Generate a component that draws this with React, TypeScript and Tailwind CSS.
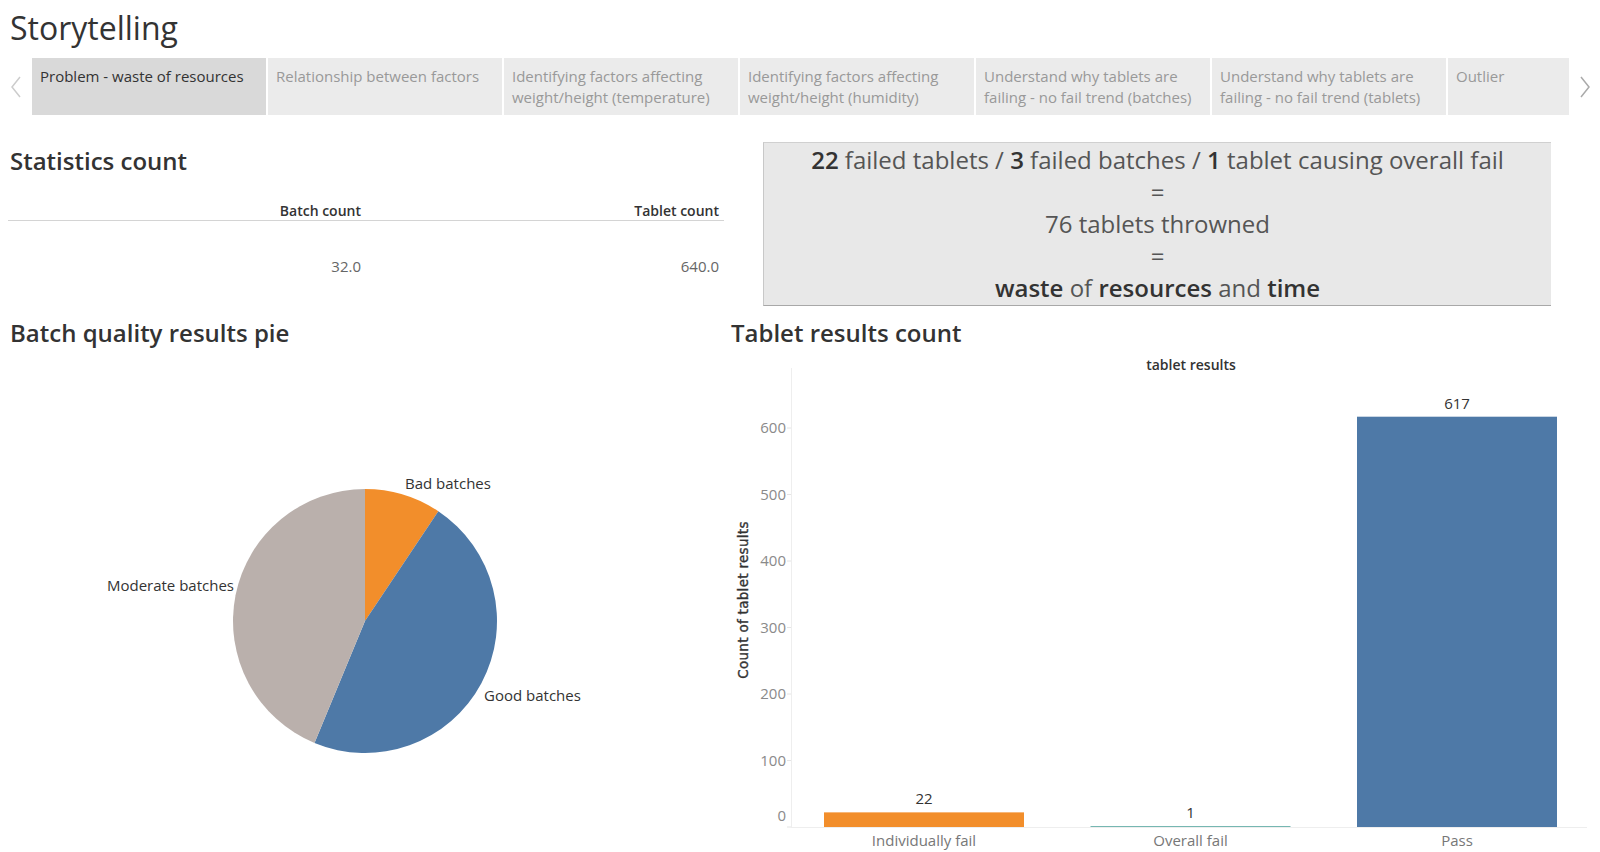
import React from "react";

const tabs = [
    { label: "Problem - waste of resources", active: true },
    { label: "Relationship between factors" },
    { label: "Identifying factors affecting weight/height (temperature)" },
    { label: "Identifying factors affecting weight/height (humidity)" },
    { label: "Understand why tablets are failing - no fail trend (batches)" },
    { label: "Understand why tablets are failing - no fail trend (tablets)" },
];

const pieSlices = [
    { name: "Bad batches", value: 3, color: "#f28e2b" },
    { name: "Good batches", value: 15, color: "#4e79a7" },
    { name: "Moderate batches", value: 14, color: "#bab0ac" },
];

const bars = [
    { name: "Individually fail", value: 22, color: "#f28e2b" },
    { name: "Overall fail", value: 1, color: "#76b7b2" },
    { name: "Pass", value: 617, color: "#4e79a7" },
];

function PieChart() {
    const cx = 365;
    const cy = 270;
    const r = 132;
    const total = pieSlices.reduce((s, p) => s + p.value, 0);
    const pt = (deg: number) => {
        const a = (deg * Math.PI) / 180;
        return [cx + r * Math.sin(a), cy - r * Math.cos(a)];
    };
    let start = 0;
    const paths = pieSlices.map((s) => {
        const sweep = (s.value / total) * 360;
        const [x1, y1] = pt(start);
        const [x2, y2] = pt(start + sweep);
        const large = sweep > 180 ? 1 : 0;
        start += sweep;
        return (
            <path
                key={s.name}
                d={`M${cx},${cy} L${x1},${y1} A${r},${r} 0 ${large} 1 ${x2},${y2} Z`}
                fill={s.color}
            />
        );
    });

    return (
        <svg width={731} height={501} className="block">
            {paths}
            <g fontSize="15" fill="#333">
                <text x={405} y={138}>Bad batches</text>
                <text x={234} y={240} textAnchor="end">Moderate batches</text>
                <text x={484} y={350}>Good batches</text>
            </g>
        </svg>
    );
}

function BarChart() {
    const base = 476;
    const k = 0.665;
    const ticks = [0, 100, 200, 300, 400, 500, 600];
    return (
        <svg width={869} height={501} className="block">
            <text x={460} y={19} textAnchor="middle" fontSize="14" fontWeight="600" fill="#333">
                tablet results
            </text>
            <line x1={60.5} y1={17} x2={60.5} y2={base} stroke="#eeeeee" />
            <line x1={60} y1={base + 0.5} x2={856} y2={base + 0.5} stroke="#eeeeee" />
            {ticks.map((t) => (
                <g key={t}>
                    <line x1={56} x2={60} y1={base - t * k} y2={base - t * k} stroke="#e4e4e4" />
                    <text
                        x={55}
                        y={(t === 0 ? 465 : base - t * k) + 5}
                        textAnchor="end"
                        fontSize="15"
                        fill="#8a8a8a"
                    >
                        {t}
                    </text>
                </g>
            ))}
            <text
                transform="translate(17,249) rotate(-90)"
                textAnchor="middle"
                fontSize="13.5"
                fill="#333"
                stroke="#333"
                strokeWidth="0.35"
                fontFamily="'DejaVu Sans', sans-serif"
                letterSpacing="0.3"
            >
                Count of tablet results
            </text>
            {bars.map((b, i) => {
                const x = 93 + i * 266.5;
                const h = Math.max(1, b.value * k);
                return (
                    <g key={b.name}>
                        <rect x={x} y={base - h} width={200} height={h} fill={b.color} />
                        <text
                            x={x + 100}
                            y={base - h - 8}
                            textAnchor="middle"
                            fontSize="15"
                            fill="#333"
                        >
                            {b.value}
                        </text>
                        <text x={x + 100} y={495} textAnchor="middle" fontSize="15" fill="#777">
                            {b.name}
                        </text>
                    </g>
                );
            })}
        </svg>
    );
}

export default function App() {
    return (
        <div className="w-[1600px] h-[852px] overflow-hidden bg-white text-[#333] font-['Open_Sans',sans-serif]">
            <h1 className="h-[58px] pl-[10px] pt-[8px] text-[32px] leading-[40px] text-[#333]">Storytelling</h1>

            {/* story points */}
            <div className="flex h-[57px]">
                <div className="w-[32px] flex items-center justify-center text-[#cccccc]">
                    <svg width="12" height="22" viewBox="0 0 12 22" fill="none" stroke="currentColor" strokeWidth="1.5">
                        <path d="M10 1 L2 11 L10 21" />
                    </svg>
                </div>
                <div className="flex gap-[2px]">
                    {tabs.map((t) => (
                        <div
                            key={t.label}
                            className={`w-[234px] px-[8px] pt-[8px] text-[15px] leading-[21px] ${t.active ? "bg-[#d9d9d9] text-[#333]" : "bg-[#ebebeb] text-[#999]"
                                }`}
                        >
                            {t.label}
                        </div>
                    ))}
                    <div className="w-[121px] px-[8px] pt-[8px] text-[15px] leading-[21px] bg-[#ebebeb] text-[#999]">
                        Outlier
                    </div>
                </div>
                <div className="flex-1 flex items-center justify-center text-[#aaaaaa]">
                    <svg width="12" height="22" viewBox="0 0 12 22" fill="none" stroke="currentColor" strokeWidth="1.5">
                        <path d="M2 1 L10 11 L2 21" />
                    </svg>
                </div>
            </div>

            {/* top row */}
            <div className="flex h-[200px]">
                <div className="w-[735px] pt-[30px]">
                    <h2 className="pl-[10px] text-[24px] leading-[32px] font-semibold">Statistics count</h2>
                    <div className="ml-[8px] w-[716px] mt-[25px]">
                        <div className="grid grid-cols-2 border-b border-[#d4d4d4] text-[14px] leading-[18px] font-semibold">
                            <div className="text-right pr-[5px]">Batch count</div>
                            <div className="text-right pr-[5px]">Tablet count</div>
                        </div>
                        <div className="grid grid-cols-2 text-[15px] leading-[20px] text-[#666] pt-[35px]">
                            <div className="text-right pr-[5px]">32.0</div>
                            <div className="text-right pr-[5px]">640.0</div>
                        </div>
                    </div>
                </div>
                <div className="flex-1 pt-[27px]">
                    <div className="ml-[28px] w-[788px] h-[164px] bg-[#e8e8e8] border-t border-l border-b border-t-[#d0d0d0] border-l-[#c8c8c8] border-b-[#a8a8a8] pt-[1px] text-center text-[24px] leading-[32px] text-[#555]">
                        <div>
                            <span className="font-semibold text-[#333]">22</span> failed tablets / <span className="font-semibold text-[#333]">3</span> failed batches / <span className="font-semibold text-[#333]">1</span> tablet causing overall fail
                        </div>
                        <div>=</div>
                        <div>76 tablets throwned</div>
                        <div>=</div>
                        <div>
                            <span className="font-semibold text-[#333]">waste</span> of <span className="font-semibold text-[#333]">resources</span> and <span className="font-semibold text-[#333]">time</span>
                        </div>
                    </div>
                </div>
            </div>

            {/* bottom row */}
            <div className="flex">
                <div className="w-[731px]">
                    <h2 className="h-[36px] pl-[10px] text-[24px] leading-[36px] font-semibold">Batch quality results pie</h2>
                    <PieChart />
                </div>
                <div className="flex-1">
                    <h2 className="h-[36px] text-[24px] leading-[36px] font-semibold">Tablet results count</h2>
                    <BarChart />
                </div>
            </div>
        </div>
    );
}
